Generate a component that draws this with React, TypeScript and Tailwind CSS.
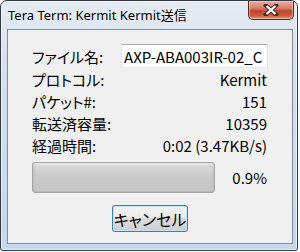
import React from "react";

const jp = "[font-family:'Noto_Sans_CJK_JP','Noto_Sans',sans-serif] [font-feature-settings:'palt']";

function CloseButton() {
  return (
    <div className="absolute left-[247px] top-0 w-[46px] h-[19px] rounded-b-[5px] border border-t-0 border-[#5a2a22] bg-[linear-gradient(to_bottom,#eab0a2_0%,#d77e6a_40%,#c2432c_55%,#c85a3f_80%,#e09a7a_100%)] shadow-[inset_0_0_0_1px_rgba(255,210,200,0.5)] flex items-center justify-center">
      <svg width="16" height="12" viewBox="0 0 16 12">
        <path d="M3 1.5 L13 10.5 M13 1.5 L3 10.5" stroke="#4a2a26" strokeWidth="4.2" strokeLinecap="square" />
        <path d="M3.5 2 L12.5 10 M12.5 2 L3.5 10" stroke="#ffffff" strokeWidth="2.3" strokeLinecap="butt" />
      </svg>
    </div>
  );
}

function Row({ label, value }: { label: string; value: string }) {
  return (
    <div className="flex h-[22px] items-center">
      <div className="w-[89px] text-[15px] leading-none text-black">{label}</div>
      <div className="w-[147px] text-right text-[15px] leading-none text-black pr-[1px]">{value}</div>
    </div>
  );
}

export default function App() {
  return (
    <div className={`w-[300px] h-[252px] bg-white relative overflow-hidden ${jp}`}>
      <div className="relative w-[298px] h-[251px] rounded-t-[7px] rounded-b-[3px] border border-[#2f3944] bg-[linear-gradient(to_bottom,#e4ebf3_0%,#d3dfec_30%,#c5d7ec_100%)] shadow-[inset_0_0_0_1px_rgba(255,255,255,0.6)]">
        <div className="h-[28px] flex items-center pl-[7px] pt-[1px]">
          <span className="text-[13px] leading-none text-black [font-family:'Noto_Sans','Noto_Sans_CJK_JP',sans-serif] [text-shadow:0_0_6px_rgba(255,255,255,0.9)]">
            Tera Term: Kermit Kermit送信
          </span>
        </div>
        <CloseButton />
        <div className="ml-[6px] w-[286px] h-[215px] border border-[#7f8c99] bg-[#f0f0f0] pl-[24px] pt-[14px]">
          <div className="flex h-[24px] items-center">
            <div className="w-[89px] text-[15px] leading-none text-black">ファイル名:</div>
            <div className="w-[147px] h-[24px] bg-white border border-[#abadb3] border-l-[#e2e3ea] border-r-[#dbdfe6] border-b-[#e3e9ef] overflow-hidden whitespace-nowrap pl-[2px] flex items-center text-[15px] leading-none text-black">
              AXP-ABA003IR-02_C
            </div>
          </div>
          <Row label="プロトコル:" value="Kermit" />
          <Row label="パケット#:" value="151" />
          <Row label="転送済容量:" value="10359" />
          <Row label="経過時間:" value="0:02 (3.47KB/s)" />
          <div className="flex items-center mt-[6px] h-[31px]">
            <div className="w-[183px] h-[31px] rounded-[3px] border border-[#a8a8a8] bg-[linear-gradient(to_bottom,#efefef_0%,#d6d6d6_12%,#cacaca_50%,#c6c6c6_100%)] shadow-[inset_1px_0_2px_rgba(0,0,0,0.08),inset_-1px_0_2px_rgba(0,0,0,0.08)]" />
            <div className="w-[53px] text-right text-[15px] leading-none text-black pr-[1px]">0.9%</div>
          </div>
          <div className="flex mt-[12px] pl-[80px]">
            <button className="w-[76px] h-[27px] rounded-[3px] border border-[#3c7fb1] bg-[linear-gradient(to_bottom,#f3f3f3_0%,#ebebeb_45%,#dddddd_50%,#cfcfcf_100%)] shadow-[inset_0_0_0_1px_#c0e4f7] flex items-center justify-center text-[16px] leading-none text-black p-0 whitespace-nowrap">
              キャンセル
            </button>
          </div>
        </div>
      </div>
    </div>
  );
}
